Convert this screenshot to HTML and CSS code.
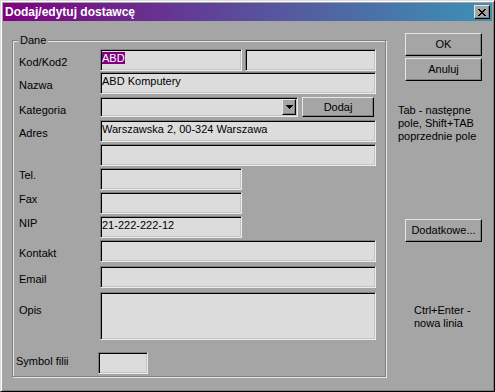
FILE: index.html
```html
<!DOCTYPE html>
<html lang="pl">
<head>
    <meta charset="UTF-8">
    <title>Dodaj/edytuj dostawcę</title>
    <link rel="stylesheet" href="styles.css">
</head>
<body>
    <div class="window">
        <div class="titlebar">
            <span class="title">Dodaj/edytuj dostawcę</span>
            <span class="btn btn-close">
                <svg width="8" height="7" viewBox="0 0 8 7" shape-rendering="crispEdges">
                    <path d="M0 0h2v1H0z M6 0h2v1H6z M1 1h2v1H1z M5 1h2v1H5z M2 2h4v1H2z M3 3h2v1H3z M2 4h4v1H2z M1 5h2v1H1z M5 5h2v1H5z M0 6h2v1H0z M6 6h2v1H6z" fill="#000"/>
                </svg>
            </span>
        </div>

        <div class="content">
            <fieldset class="group">
                <legend>Dane</legend>

                <div class="row">
                    <span class="row-label">Kod/Kod2</span>
                    <span class="edit w-short"><span class="selected">ABD</span></span>
                    <span class="edit w-kod2"></span>
                </div>
                <div class="row gap-1">
                    <span class="row-label">Nazwa</span>
                    <span class="edit w-long">ABD Komputery</span>
                </div>
                <div class="row gap-3">
                    <span class="row-label">Kategoria</span>
                    <span class="combo">
                        <span class="btn combo-btn">
                            <svg width="7" height="4" viewBox="0 0 7 4" shape-rendering="crispEdges">
                                <path d="M0 0h7v1H0z M1 1h5v1H1z M2 2h3v1H2z M3 3h1v1H3z" fill="#000"/>
                            </svg>
                        </span>
                    </span>
                    <span class="btn btn-add">Dodaj</span>
                </div>
                <div class="row gap-3">
                    <span class="row-label">Adres</span>
                    <span class="edit w-long">Warszawska 2, 00-324 Warszawa</span>
                </div>
                <div class="row">
                    <span class="row-label"></span>
                    <span class="edit w-long"></span>
                </div>
                <div class="row">
                    <span class="row-label top">Tel.</span>
                    <span class="edit w-short"></span>
                </div>
                <div class="row">
                    <span class="row-label top">Fax</span>
                    <span class="edit w-short"></span>
                </div>
                <div class="row">
                    <span class="row-label top">NIP</span>
                    <span class="edit w-short">21-222-222-12</span>
                </div>
                <div class="row">
                    <span class="row-label">Kontakt</span>
                    <span class="edit w-long"></span>
                </div>
                <div class="row gap-4">
                    <span class="row-label">Email</span>
                    <span class="edit w-long"></span>
                </div>
                <div class="row gap-4">
                    <span class="row-label memo-label">Opis</span>
                    <span class="edit w-long memo"></span>
                </div>
                <div class="row row-symbol">
                    <span class="row-label">Symbol filii</span>
                    <span class="edit w-symbol"></span>
                </div>
            </fieldset>

            <aside class="side">
                <span class="btn side-btn">OK</span>
                <span class="btn side-btn btn-cancel">Anuluj</span>
                <p class="hint hint-tab">Tab - następne<br>pole, Shift+TAB<br>poprzednie pole</p>
                <span class="btn side-btn btn-more">Dodatkowe...</span>
                <p class="hint hint-enter">Ctrl+Enter -<br>nowa linia</p>
            </aside>
        </div>
    </div>
</body>
</html>
```

FILE: styles.css
```css
:root {
    --face: #a5a5a5;
    --field: #dcdcdc;
    --light: #e6e6e6;
    --shadow: #808080;
    --dark: #000000;
    --select: #800080;
}
* { box-sizing: border-box; margin: 0; padding: 0; }
body {
    background: var(--face);
    font-family: "Liberation Sans", Arial, sans-serif;
    font-size: 11px;
    line-height: 13px;
    color: #000;
}

/* window frame */
.window {
    width: 495px; height: 392px; padding: 2px;
    border: 1px solid; border-color: #dcdcdc var(--dark) var(--dark) #dcdcdc;
    box-shadow: inset 1px 1px 0 #fff, inset -1px -1px 0 var(--shadow);
}
.titlebar {
    height: 18px; display: flex; align-items: center; justify-content: space-between;
    padding-left: 2px; color: #fff; font-size: 12px; font-weight: bold; line-height: 18px;
    background: linear-gradient(to right, #800080, #5a4e9c 50%, #3b92b6);
}
.btn {
    display: flex; align-items: center; justify-content: center;
    background: var(--face); color: #000;
    border: 1px solid; border-color: var(--light) var(--dark) var(--dark) var(--light);
    box-shadow: inset -1px -1px 0 var(--shadow);
}
.btn-close { width: 16px; height: 14px; margin-right: 2px; }

/* dialog body */
.content { display: flex; padding: 12px 0 0 9px; }
.group {
    width: 374px; border: 1px solid var(--shadow); padding: 2px 0 2px;
    box-shadow: inset 1px 1px 0 var(--light), 1px 1px 0 var(--light);
}
.group legend {
    margin-left: 5px; padding: 0 2px; line-height: 14px; background: var(--face);
}
.row { display: flex; align-items: flex-start; padding-left: 6px; margin-top: 2px; }
.row:first-of-type { margin-top: 0; }
.row.gap-1 { margin-top: 1px; }
.row.gap-3 { margin-top: 3px; }
.row.gap-4 { margin-top: 4px; }
.row-label { width: 81px; padding-top: 7px; flex-shrink: 0; }
.row-label.top { padding-top: 1px; }
.row-label.memo-label { padding-top: 12px; }
.row-symbol { margin-top: 12px; padding-left: 3px; }
.row-symbol .row-label { width: 82px; padding-top: 3px; }

.edit {
    display: block; height: 22px; padding: 2px 1px; white-space: nowrap; overflow: hidden;
    background: var(--field);
    border: 1px solid; border-color: var(--shadow) #ececec #ececec var(--shadow);
    box-shadow: inset 1px 1px 0 var(--dark), inset -1px -1px 0 #c4c4c4;
}
.w-short { width: 142px; }
.w-kod2 { width: 131px; margin-left: 3px; }
.w-long { width: 276px; }
.w-symbol { width: 50px; }
.memo { height: 48px; }
.selected { background: var(--select); color: #fff; }

.combo {
    display: flex; justify-content: flex-end; width: 198px; height: 20px; padding: 1px;
    background: var(--field);
    border: 1px solid; border-color: var(--shadow) #ececec #ececec var(--shadow);
    box-shadow: inset 1px 1px 0 var(--dark), inset -1px -1px 0 #c4c4c4;
}
.combo-btn { width: 14px; height: 16px; }
.btn-add { width: 72px; height: 20px; margin-left: 4px; }

/* right column */
.side { width: 90px; margin-left: 12px; display: flex; flex-direction: column; }
.side-btn { width: 77px; height: 23px; margin-left: 7px; }
.btn-cancel { margin-top: 2px; }
.hint-tab { margin-top: 23px; }
.btn-more { margin-top: 76px; }
.hint-enter { margin-top: 62px; padding-left: 16px; }
```
